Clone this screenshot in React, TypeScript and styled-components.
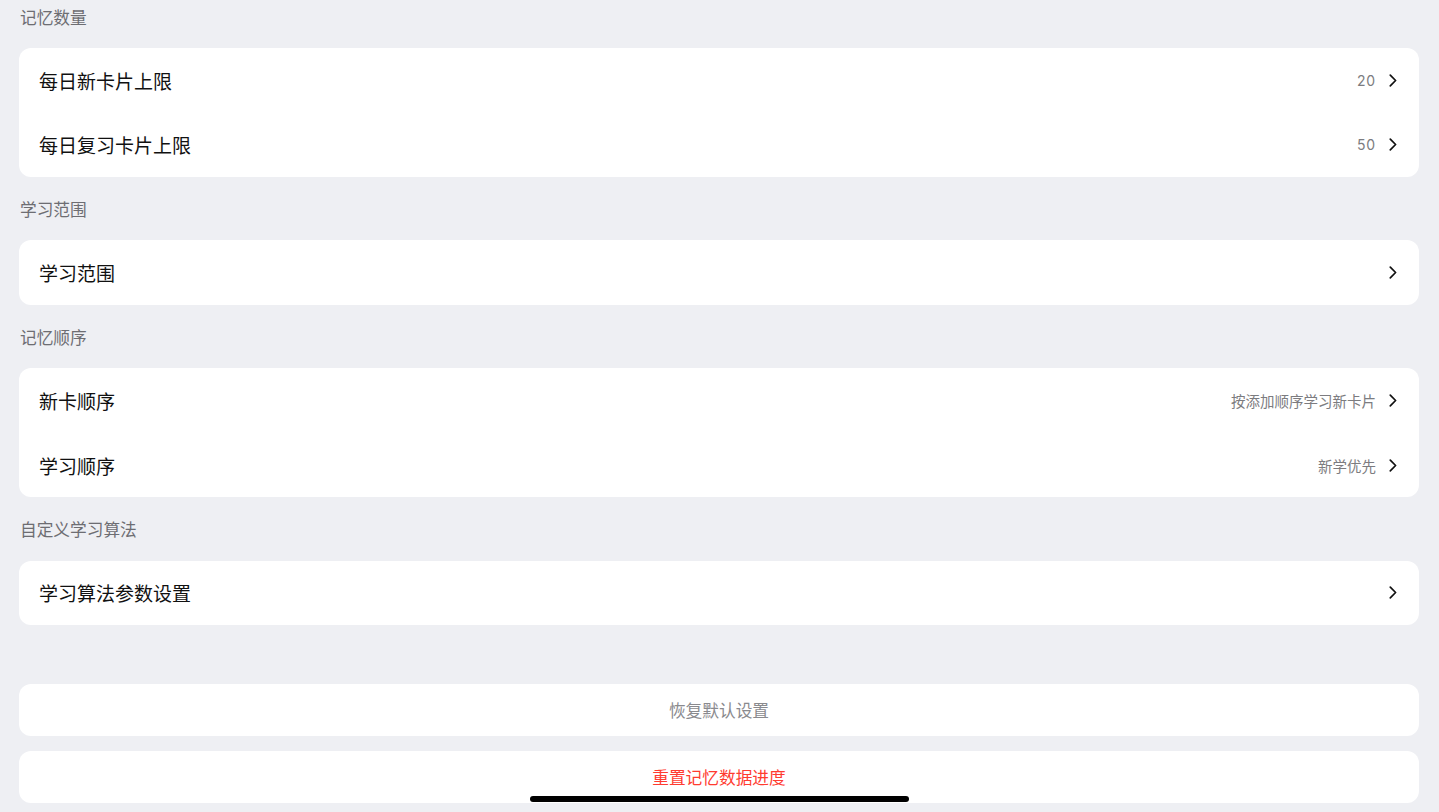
import styled, { createGlobalStyle } from "styled-components";

// #region ##################################################################################### DATA
type RowItem = { label: string; value?: string; numeric?: boolean };
type Section = { title: string; rows: RowItem[] };

const SECTIONS: Section[] = [
  {
    title: "记忆数量",
    rows: [
      { label: "每日新卡片上限", value: "20", numeric: true },
      { label: "每日复习卡片上限", value: "50", numeric: true },
    ],
  },
  { title: "学习范围", rows: [{ label: "学习范围" }] },
  {
    title: "记忆顺序",
    rows: [
      { label: "新卡顺序", value: "按添加顺序学习新卡片" },
      { label: "学习顺序", value: "新学优先" },
    ],
  },
  { title: "自定义学习算法", rows: [{ label: "学习算法参数设置" }] },
];
// #endregion

// #region ##################################################################################### STYLES
const GlobalStyle = createGlobalStyle`
  html, body {
    margin: 0;
    padding: 0;
    background: #eeeff3;
    font-family: "Noto Sans CJK SC", "Noto Sans", sans-serif;
    -webkit-font-smoothing: antialiased;
  }
`;

const Page = styled.div`
  display: flex;
  flex-direction: column;
  padding: 0 20px 8px 19px;
  min-height: 812px;
  box-sizing: border-box;
`;

const SectionHeader = styled.div<{ $first?: boolean }>`
  padding: ${(p) => (p.$first ? "5px 0 19px 1px" : "19.7px 0 19.5px 1px")};
  font-size: 16.7px;
  line-height: 24px;
  color: #6d6d72;
`;

const Card = styled.div`
  background: #ffffff;
  border-radius: 12px;
  overflow: hidden;
`;

const Row = styled.div`
  display: flex;
  align-items: center;
  height: 64.6px;
  padding: 0 22px 0 20px;
`;

const Label = styled.span`
  flex: 1;
  font-size: 19px;
  color: #111111;
`;

const Value = styled.span<{ $numeric?: boolean }>`
  font-size: ${(p) => (p.$numeric ? "14px" : "14.5px")};
  letter-spacing: ${(p) => (p.$numeric ? "0.8px" : "0")};
  color: #7c7c80;
  margin-right: 13px;
  font-family: ${(p) =>
    p.$numeric ? "Inter, 'Noto Sans CJK SC', sans-serif" : "'Noto Sans CJK SC', sans-serif"};
`;

const Chevron = styled.svg`
  width: 8px;
  height: 13px;
  flex: none;
`;

const Actions = styled.div`
  display: flex;
  flex-direction: column;
  gap: 15px;
  margin-top: 58.5px;
`;

const ActionButton = styled.button<{ $danger?: boolean }>`
  height: 52px;
  border: none;
  border-radius: 12px;
  background: #ffffff;
  font-family: inherit;
  font-size: 16.7px;
  color: ${(p) => (p.$danger ? "#ff3b30" : "#8a8a8e")};
  cursor: pointer;
`;

const HomeIndicator = styled.div`
  position: fixed;
  left: 530px;
  top: 796px;
  width: 379px;
  height: 6px;
  border-radius: 3px;
  background: #000000;
`;
// #endregion

// #region ##################################################################################### COMPONENT
const ChevronIcon = () => (
  <Chevron viewBox="0 0 8 13" fill="none">
    <path d="M1.3 1.2 L6.6 6.5 L1.3 11.8" stroke="#111" strokeWidth="1.7" strokeLinecap="round" strokeLinejoin="round" />
  </Chevron>
);

const App = () => {
  return (
    <>
      <GlobalStyle />
      <Page>
        {SECTIONS.map((s, i) => (
          <div key={s.title}>
            <SectionHeader $first={i === 0}>{s.title}</SectionHeader>
            <Card>
              {s.rows.map((r) => (
                <Row key={r.label}>
                  <Label>{r.label}</Label>
                  {r.value && <Value $numeric={r.numeric}>{r.value}</Value>}
                  <ChevronIcon />
                </Row>
              ))}
            </Card>
          </div>
        ))}

        <Actions>
          <ActionButton>恢复默认设置</ActionButton>
          <ActionButton $danger>重置记忆数据进度</ActionButton>
        </Actions>
      </Page>
      <HomeIndicator />
    </>
  );
};
// #endregion

export default App;
